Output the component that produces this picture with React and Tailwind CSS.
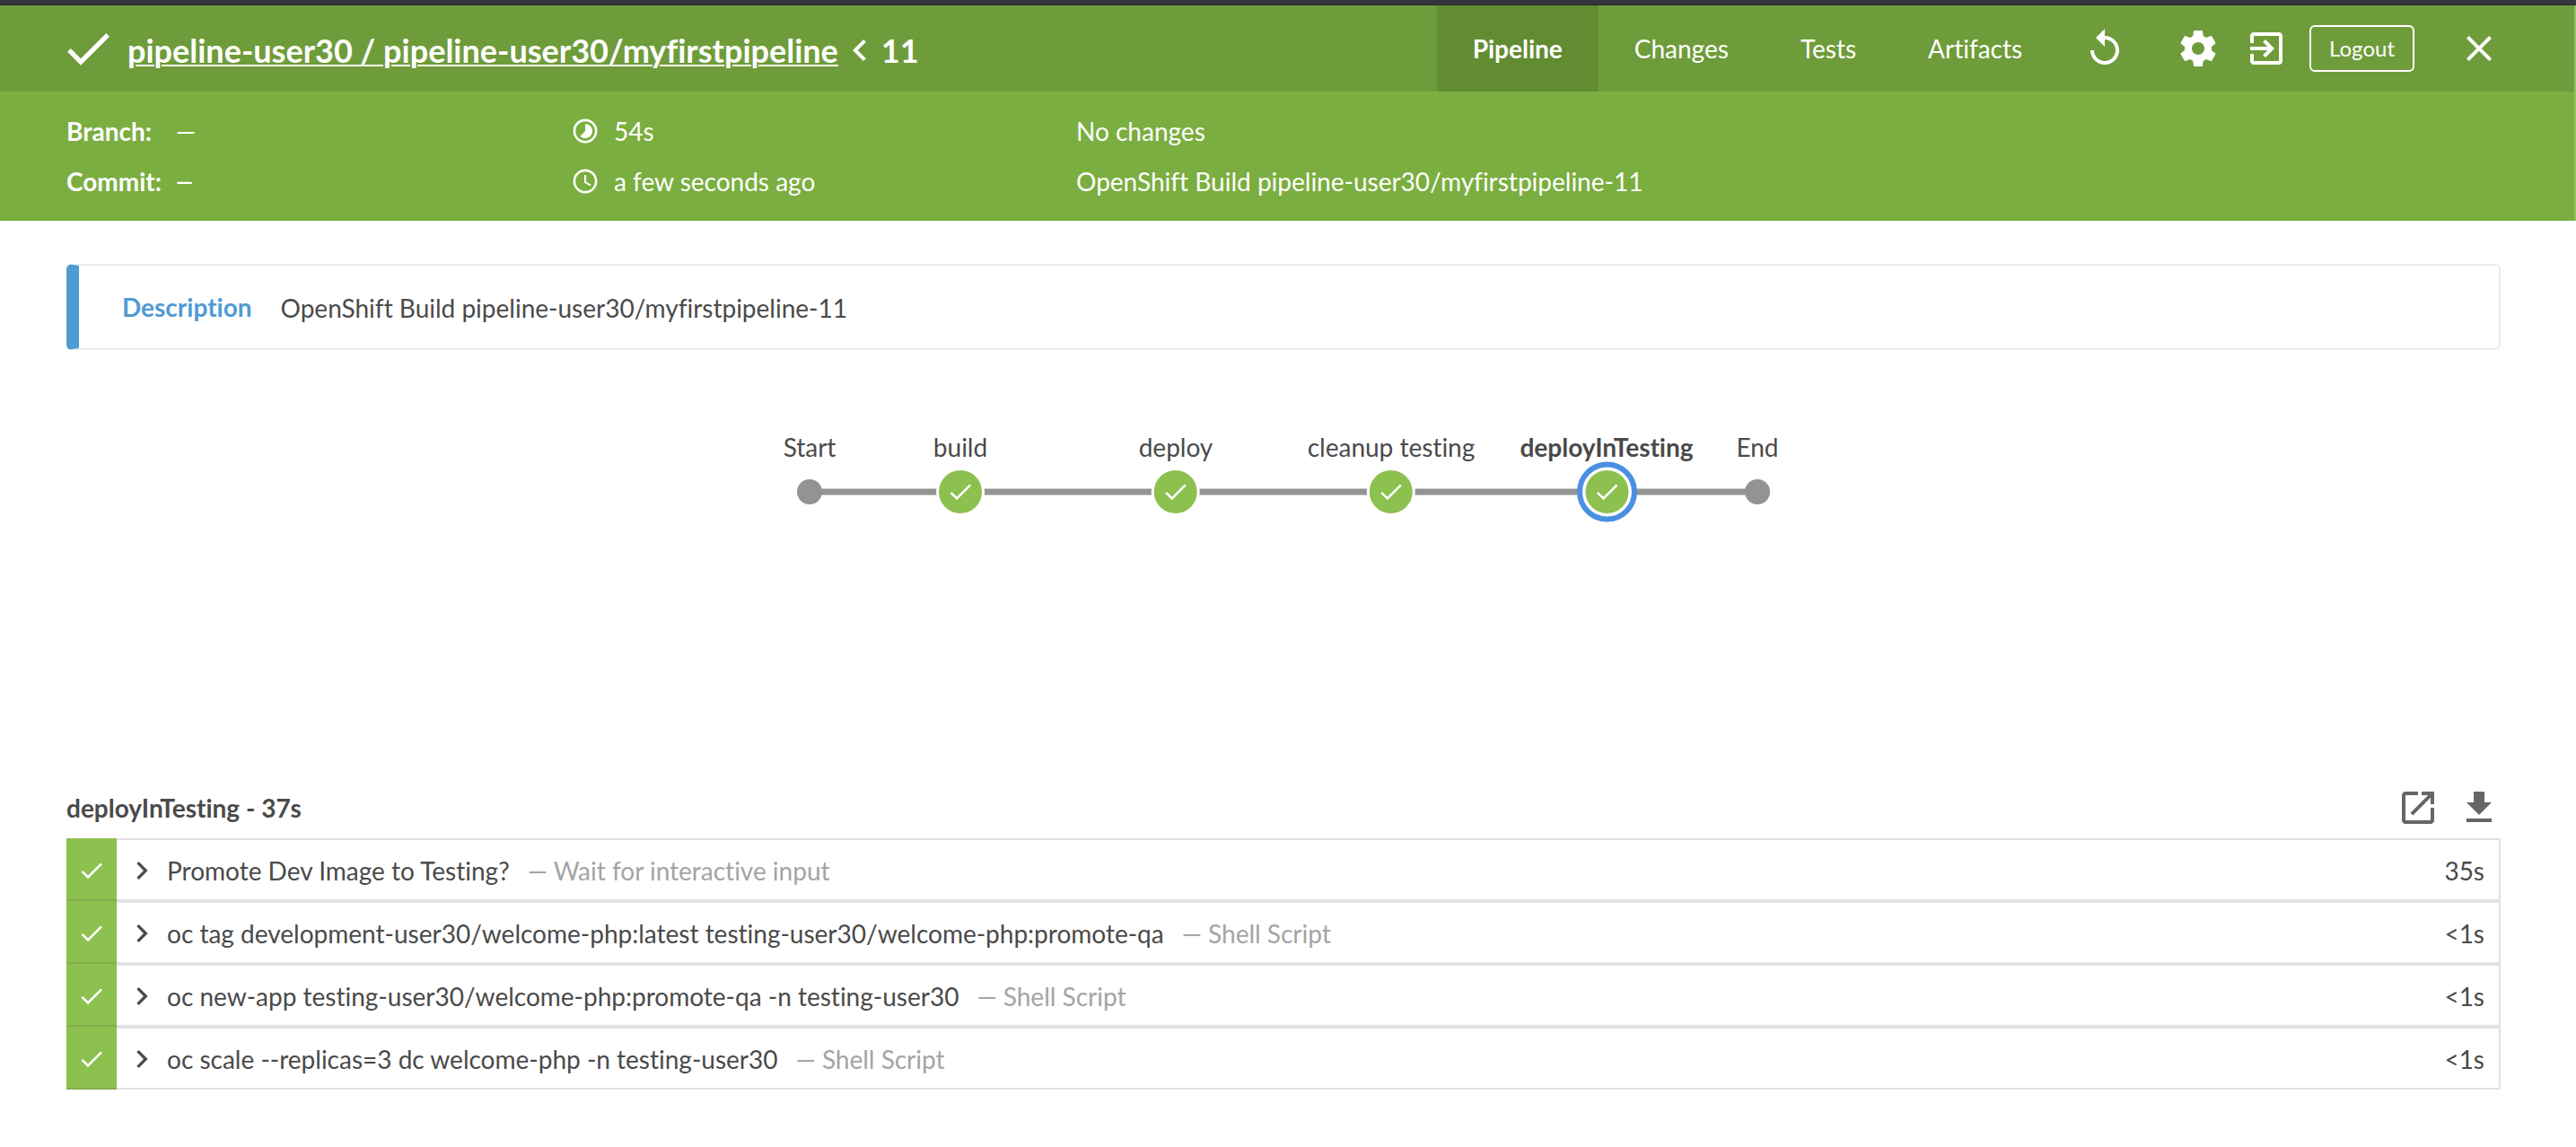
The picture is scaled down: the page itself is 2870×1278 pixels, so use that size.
import React from "react";

const STEPS = [
  { name: "Promote Dev Image to Testing?", kind: "Wait for interactive input", time: "35s" },
  { name: "oc tag development-user30/welcome-php:latest testing-user30/welcome-php:promote-qa", kind: "Shell Script", time: "<1s" },
  { name: "oc new-app testing-user30/welcome-php:promote-qa -n testing-user30", kind: "Shell Script", time: "<1s" },
  { name: "oc scale --replicas=3 dc welcome-php -n testing-user30", kind: "Shell Script", time: "<1s" },
];

// x is the centre of each node on the 1180px wide graph canvas.
const STAGES = [
  { name: "Start", x: 62, terminal: true },
  { name: "build", x: 230 },
  { name: "deploy", x: 470 },
  { name: "cleanup testing", x: 710 },
  { name: "deployInTesting", x: 950, selected: true },
  { name: "End", x: 1118, terminal: true },
];

const ICONS = {
  check: "M9 16.2L4.8 12l-1.4 1.4L9 19 21 7l-1.4-1.4L9 16.2z",
  replay: "M12 5V1L7 6l5 5V7c3.31 0 6 2.69 6 6s-2.69 6-6 6-6-2.69-6-6H4c0 4.42 3.58 8 8 8s8-3.58 8-8-3.58-8-8-8z",
  settings:
    "M19.43 12.98c.04-.32.07-.64.07-.98s-.03-.66-.07-.98l2.11-1.65c.19-.15.24-.42.12-.64l-2-3.46c-.12-.22-.39-.3-.61-.22l-2.49 1c-.52-.4-1.08-.73-1.69-.98l-.38-2.65C14.46 2.18 14.25 2 14 2h-4c-.25 0-.46.18-.49.42l-.38 2.65c-.61.25-1.17.59-1.69.98l-2.49-1c-.23-.09-.49 0-.61.22l-2 3.46c-.13.22-.07.49.12.64l2.11 1.65c-.04.32-.07.65-.07.98s.03.66.07.98l-2.11 1.65c-.19.15-.24.42-.12.64l2 3.46c.12.22.39.3.61.22l2.49-1c.52.4 1.08.73 1.69.98l.38 2.65c.03.24.24.42.49.42h4c.25 0 .46-.18.49-.42l.38-2.65c.61-.25 1.17-.59 1.69-.98l2.49 1c.23.09.49 0 .61-.22l2-3.46c.12-.22.07-.49-.12-.64l-2.11-1.65zM12 15.5c-1.93 0-3.5-1.57-3.5-3.5s1.57-3.5 3.5-3.5 3.5 1.57 3.5 3.5-1.57 3.5-3.5 3.5z",
  exit: "M10.09 15.59L11.5 17l5-5-5-5-1.41 1.41L12.67 11H3v2h9.67l-2.58 2.59zM19 3H5c-1.11 0-2 .9-2 2v4h2V5h14v14H5v-4H3v4c0 1.1.89 2 2 2h14c1.1 0 2-.9 2-2V5c0-1.1-.9-2-2-2z",
  close: "M19 6.41L17.59 5 12 10.59 6.41 5 5 6.41 10.59 12 5 17.59 6.41 19 12 13.41 17.59 19 19 17.59 13.41 12z",
  open: "M19 19H5V5h7V3H5c-1.11 0-2 .9-2 2v14c0 1.1.89 2 2 2h14c1.1 0 2-.9 2-2v-7h-2v7zM14 3v2h3.59l-9.83 9.83 1.41 1.41L19 6.41V10h2V3h-7z",
  download: "M19 9h-4V3H9v6H5l7 7 7-7zM5 18v2h14v-2H5z",
  right: "M10 6L8.59 7.41 13.17 12l-4.58 4.59L10 18l6-6z",
  left: "M15.41 7.41L14 6l-6 6 6 6 1.41-1.41L10.83 12z",
};

function Icon({ name, className }) {
  return (
    <svg viewBox="0 0 24 24" fill="currentColor" aria-hidden="true" className={className}>
      <path d={ICONS[name]} />
    </svg>
  );
}

function Header() {
  return (
    <header className="flex h-24 items-center bg-[#6f9c3a] pr-[82px] pl-[66px]">
      <Icon name="check" className="mr-3 size-16" />
      <h1 className="flex flex-1 items-center pt-1 text-4xl font-bold">
        <a href="#pipeline" className="underline decoration-2 underline-offset-2">
          pipeline-user30 / pipeline-user30/myfirstpipeline
        </a>
        <Icon name="left" className="size-12" />
        <span>11</span>
      </h1>
      <nav className="flex h-full">
        <a href="#pipeline" className="flex items-center bg-[#628c32] px-10 font-bold">Pipeline</a>
        <a href="#changes" className="flex items-center px-10">Changes</a>
        <a href="#tests" className="flex items-center px-10">Tests</a>
        <a href="#artifacts" className="flex items-center px-10">Artifacts</a>
      </nav>
      <button type="button" aria-label="Rerun" className="ml-7"><Icon name="replay" className="size-12" /></button>
      <button type="button" aria-label="Settings" className="ml-14"><Icon name="settings" className="size-12" /></button>
      <button type="button" aria-label="Go to classic" className="ml-7"><Icon name="exit" className="size-12" /></button>
      <button type="button" className="ml-6 h-[52px] rounded-md border-2 border-white px-5 text-2xl">Logout</button>
      <button type="button" aria-label="Close" className="ml-12"><Icon name="close" className="size-12" /></button>
    </header>
  );
}

function Summary() {
  return (
    <section className="grid h-36 grid-cols-[562px_563px_1fr] bg-[#7bae40] pt-4 pl-[74px] leading-14">
      <dl className="grid grid-cols-[auto_1fr] content-start">
        <dt className="font-bold">Branch:</dt>
        <dd className="pl-4">—</dd>
        <dt className="font-bold">Commit:</dt>
        <dd className="pl-4 text-2xl leading-14 font-bold">—</dd>
      </dl>
      <div>
        <p className="flex items-center gap-4">
          <svg viewBox="0 0 32 32" className="size-8" aria-hidden="true">
            <circle cx="16" cy="16" r="12.1" fill="none" stroke="currentColor" strokeWidth="2.6" />
            <path d="M16 8a8 8 0 1 1-5.6 13.7L16 16z" fill="currentColor" />
          </svg>
          54s
        </p>
        <p className="flex items-center gap-4">
          <svg viewBox="0 0 32 32" className="size-8" fill="none" stroke="currentColor" strokeWidth="2.6" aria-hidden="true">
            <circle cx="16" cy="16" r="12.1" />
            <path d="M16 9v8l6 3.6" strokeWidth="2" />
          </svg>
          a few seconds ago
        </p>
      </div>
      <div>
        <p>No changes</p>
        <p>OpenShift Build pipeline-user30/myfirstpipeline-11</p>
      </div>
    </section>
  );
}

function StageNode({ stage }) {
  return (
    <svg viewBox="-34 -34 68 68" className="-my-0.5 size-[68px]" aria-hidden="true">
      {stage.terminal ? (
        <circle r="14" fill="#949393" />
      ) : (
        <>
          <circle r="27" fill="#fff" />
          {stage.selected && <circle r="30.5" fill="#fff" stroke="#4a90e2" strokeWidth="6" />}
          <circle r="24" fill="#8cc04f" />
          <g transform="scale(1.333) translate(-12 -12)">
            <path d={ICONS.check} fill="#fff" />
          </g>
        </>
      )}
    </svg>
  );
}

function PipelineGraph() {
  return (
    <section aria-label="Pipeline stages" className="relative mx-auto h-[486px] w-[1180px]">
      <svg viewBox="0 0 1180 200" className="h-[200px] w-full" aria-hidden="true">
        <path d="M62 158H1118" stroke="#949393" strokeWidth="7" />
      </svg>
      {STAGES.map((stage) => (
        <button
          key={stage.name}
          type="button"
          className="absolute top-[90px] flex -translate-x-1/2 flex-col items-center whitespace-nowrap"
          style={{ left: stage.x }}
        >
          <span className={stage.selected ? "leading-9 font-bold" : "leading-9"}>{stage.name}</span>
          <StageNode stage={stage} />
        </button>
      ))}
    </section>
  );
}

function StepRow({ step }) {
  return (
    <li className="flex h-[70px]">
      <div className="flex w-14 items-center justify-center border-b-2 border-[#80b04c] bg-[#8cc04f] pt-1 text-white">
        <Icon name="check" className="size-8" />
      </div>
      <button type="button" className="flex flex-1 items-center border-y-2 border-r-2 border-[#e2e2e2] pt-0.5 pr-4 pl-2 text-left">
        <Icon name="right" className="mr-2 size-10" />
        <span>{step.name}</span>
        <span className="ml-5 flex-1 text-[#a4a4a4]">— {step.kind}</span>
        <span>{step.time}</span>
      </button>
    </li>
  );
}

export default function App() {
  return (
    <div className="min-h-screen bg-white font-['Lato',sans-serif] text-[28px] text-[#4a4a4a] [font-variant-ligatures:none]">
      <div className="h-1.5 border-b border-[#26282a] bg-[#32363a]" />
      <div className="border-r-2 border-[#95be66] text-white">
        <Header />
        <Summary />
      </div>
      <main className="pr-[84px] pl-[74px]">
        <section className="mt-12 flex h-24 items-center rounded-md border-2 border-l-[14px] border-[#e6ebee] border-l-[#4f9bd3] pl-12">
          <h2 className="font-bold text-[#4f9bd3]">Description</h2>
          <p className="pt-0.5 pl-8">OpenShift Build pipeline-user30/myfirstpipeline-11</p>
        </section>
        <PipelineGraph />
        <div className="flex h-12 items-center gap-5 text-[#666]">
          <h3 className="flex-1 font-bold text-[#4a4a4a]">deployInTesting - 37s</h3>
          <button type="button" aria-label="Open log in new window"><Icon name="open" className="size-12" /></button>
          <button type="button" aria-label="Download log"><Icon name="download" className="size-12" /></button>
        </div>
        <ul className="mt-2.5">
          {STEPS.map((step) => (
            <StepRow key={step.name} step={step} />
          ))}
        </ul>
      </main>
    </div>
  );
}
